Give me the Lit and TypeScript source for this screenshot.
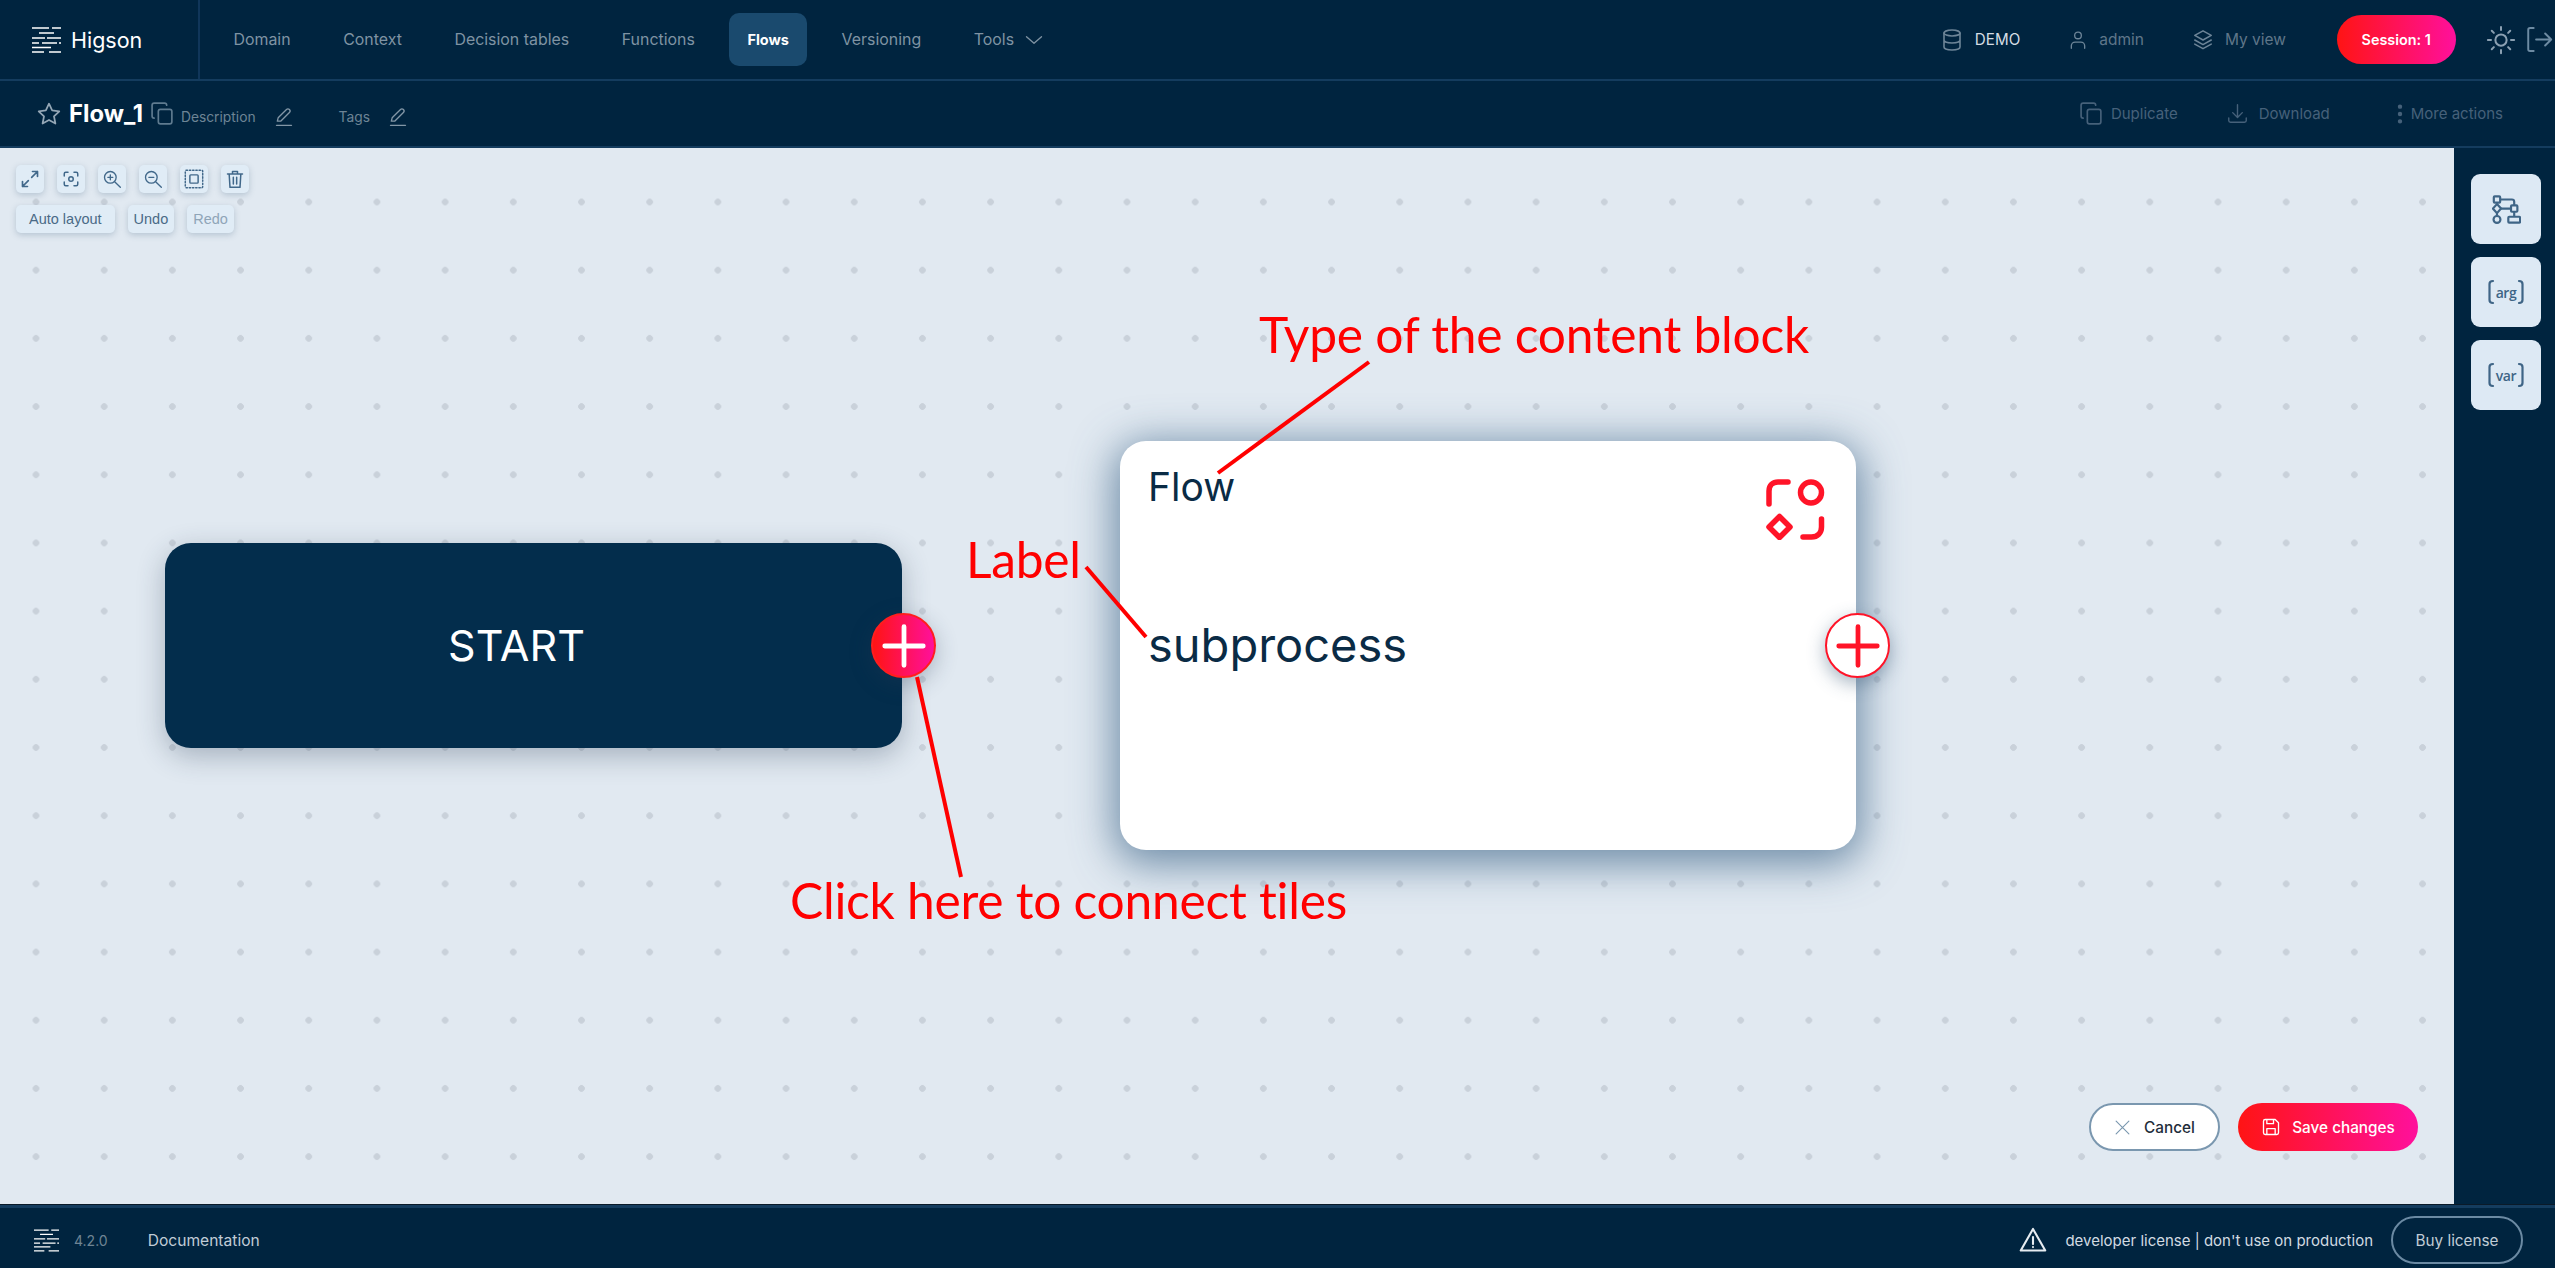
import { LitElement, html, css, svg } from 'lit';
import { customElement } from 'lit/decorators.js';

const logo = (w: number, h: number) => html`<svg width=${w} height=${h} viewBox="0 0 29 26" fill="none" stroke="#fff" stroke-width="1.5">
  <path d="M0 1h17M20 1h9M7 6h15M0 11h13M15 11h14M0 16h7M10 16h15M27 16h2M0 20.500h19M0 25h12M17 25h12"/>
</svg>`;

const ic = (size: number, body: unknown, stroke = 'currentColor', sw = 1.6) => html`<svg width=${size} height=${size} viewBox="0 0 24 24" fill="none" stroke=${stroke} stroke-width=${sw} stroke-linecap="round" stroke-linejoin="round">${body}</svg>`;

const copyPath = svg`<rect x="8" y="8" width="13" height="14" rx="2"/><path d="M4 16.500c-1 0-2-.8-2-2V4c0-1.200 1-2 2-2h10c1.200 0 2 .8 2 2"/>`;
const pencilPath = svg`<path d="M4 17l1-4L15 3c1-1 2.500-1 3.500 0s1 2.500 0 3.500L8 17zM3 22h18"/>`;
const bracket = (flip: boolean) => html`<svg width="7" height="26" viewBox="0 0 7 26" fill="none" stroke="currentColor" stroke-width="2.200" stroke-linecap="round">
  <path d=${flip ? 'M2 2c2.500 0 3.500 1 3.500 3v16c0 2-1 3-3.500 3' : 'M5 2C2.500 2 1.500 3 1.500 5v16c0 2 1 3 3.500 3'}/>
</svg>`;

@customElement('app-root')
export class AppRoot extends LitElement {
  static styles = css`
    :host {
      display: flex;
      flex-direction: column;
      width: 100%;
      height: 100vh;
      overflow: hidden;
      font-family: Inter, "Liberation Sans", sans-serif;
      background: #00243f;
      color: #fff;
    }
    .topbar {
      display: flex;
      align-items: center;
      height: 79px;
      border-bottom: 2px solid #143c5e;
      flex: none;
    }
    .brand {
      width: 166px;
      padding-left: 32px;
      height: 100%;
      display: flex;
      align-items: center;
      gap: 10px;
      border-right: 2px solid #10365a;
      font-size: 21.500px;
      font-weight: 400;
    }
    .nav {
      display: flex;
      align-items: center;
      gap: 16.600px;
      padding-left: 15.500px;
    }
    .nav a {
      display: flex;
      align-items: center;
      gap: 10px;
      height: 53px;
      padding: 0 18px;
      border-radius: 10px;
      font-size: 15.900px;
      color: #7f93a3;
    }
    .nav a.on {
      background: #1a4a6e;
      color: #fff;
      font-weight: 700;
      font-size: 14.500px;
    }
    .tr {
      margin-left: auto;
      display: flex;
      align-items: center;
      padding-right: 2px;
    }
    .ti {
      display: flex;
      align-items: center;
      gap: 11px;
      margin-right: 48px;
      font-size: 15.500px;
      color: #5f7689;
    }
    .ti.lit { color: #d5dde4; font-size: 15.200px; }
    .ti.view { margin-right: 51px; }
    .ti svg { color: #6d8598; }
    .session {
      width: 118.500px;
      height: 49px;
      border-radius: 25px;
      background: linear-gradient(90deg, #ff1414, #ff109c);
      display: flex;
      align-items: center;
      justify-content: center;
      font-size: 14.400px;
      font-weight: 600;
      margin-right: 30.500px;
    }
    .tr .sun { color: #8ba0b2; display: flex; margin-right: 8px; }
    .tr .out { color: #6d8ba3; display: flex; }

    .subbar {
      display: flex;
      align-items: center;
      height: 65px;
      border-bottom: 2px solid #143c5e;
      padding-left: 36px;
      flex: none;
    }
    .star { color: #94a7b6; display: flex; margin-right: 7px; }
    .title { font-size: 23.800px; font-weight: 700; margin-right: 7px; }
    .copy { color: #5f7b90; display: flex; margin-right: 6px; }
    .meta { font-size: 13.800px; color: #6d8495; margin-top: 7px; }
    .pen { color: #8296a6; display: flex; margin: 7px 0 0 18px; }
    .pen.a { margin-right: 45px; }
    .acts {
      margin-left: auto;
      display: flex;
      align-items: center;
      padding-right: 52px;
      font-size: 15px;
      color: #46617a;
    }
    .act { display: flex; align-items: center; gap: 11px; margin-left: 49px; }
    .act.dup { gap: 7px; margin-left: 0; }
    .act.more { gap: 0; margin-left: 59px; }

    .work { flex: 1; display: flex; min-height: 0; }
    .canvas {
      position: relative;
      flex: 1;
      background-color: #e1e9f1;
      background-image: radial-gradient(circle, #c9d1da 3px, transparent 3.600px);
      background-size: 68.200px 68.200px;
      background-position: 1.900px 19.900px;
      overflow: hidden;
    }
    .tools {
      display: flex;
      flex-direction: column;
      gap: 12px;
      padding: 17px 0 0 16px;
      position: relative;
      z-index: 1;
      width: max-content;
    }
    .row { display: flex; gap: 13px; }
    .tb {
      width: 28px;
      height: 28px;
      border-radius: 5px;
      background: #e0ecf6;
      box-shadow: 0 2px 6px rgba(70, 100, 130, .28);
      color: #41688a;
      display: flex;
      align-items: center;
      justify-content: center;
    }
    .tt {
      height: 28px;
      padding: 0 13px;
      border-radius: 5px;
      background: #e0ecf6;
      box-shadow: 0 2px 6px rgba(70, 100, 130, .28);
      color: #4a6a86;
      display: flex;
      align-items: center;
      font: 14.500px "Liberation Sans", Arial, sans-serif;
    }
    .tt.und { padding: 0 6px; }
    .tt.red { padding: 0 6px; color: #8fa5b8; }

    .node { position: absolute; border-radius: 26px; box-sizing: border-box; }
    .start {
      left: 165px;
      top: 395px;
      width: 737px;
      height: 205px;
      background: #032d4c;
      box-shadow: 0 8px 28px rgba(40, 60, 85, .32);
      display: flex;
      align-items: center;
      justify-content: center;
      padding: 0 34px 2px 0;
      font-size: 43px;
      font-weight: 400;
    }
    .flow {
      left: 1120px;
      top: 293px;
      width: 736px;
      height: 409px;
      background: #fff;
      box-shadow: 0 8px 42px 6px rgba(60, 100, 135, .7);
      color: #0a2b45;
      padding: 22px 28px;
    }
    .flow .type { font-size: 39px; line-height: 48px; }
    .flow .label { font-size: 47px; line-height: 60px; margin-top: 104px; }
    .flow .badge { position: absolute; right: 30px; top: 38px; display: flex; }
    .plus {
      position: absolute;
      width: 65px;
      height: 65px;
      border-radius: 50%;
      box-sizing: border-box;
      display: flex;
      align-items: center;
      justify-content: center;
    }
    .plus.hot {
      left: 871px;
      top: 465px;
      background: linear-gradient(90deg, #ff1414, #ff109c);
      border: 2px solid #ff1e1e;
      box-shadow: 0 6px 22px rgba(40, 60, 85, .3);
    }
    .plus.cold {
      left: 1825px;
      top: 465px;
      background: #fff;
      border: 2px solid #ff1428;
      box-shadow: 0 6px 18px rgba(60, 90, 120, .45);
    }
    .notes { position: absolute; inset: 0; pointer-events: none; }
    .note {
      position: absolute;
      color: #f00;
      font-family: Lato, "Open Sans", sans-serif;
      font-size: 49.700px;
      letter-spacing: -.25px;
      line-height: 60px;
      white-space: nowrap;
    }
    .n1 { left: 1259px; top: 156px; }
    .n2 { left: 966px; top: 381px; }
    .n3 { left: 790px; top: 722px; }
    .save {
      position: absolute;
      left: 2238px;
      top: 955px;
      width: 180px;
      height: 48px;
      border-radius: 24px;
      background: linear-gradient(90deg, #ff1414, #ff109c);
      display: flex;
      align-items: center;
      justify-content: center;
      gap: 11px;
      font-size: 15.300px;
      font-weight: 500;
    }
    .cancel {
      position: absolute;
      left: 2089px;
      top: 955px;
      width: 131px;
      height: 48px;
      border-radius: 24px;
      box-sizing: border-box;
      background: #fff;
      border: 2px solid #7a97af;
      color: #1f2d3a;
      display: flex;
      align-items: center;
      justify-content: center;
      gap: 13px;
      font-size: 15.300px;
      font-weight: 500;
    }
    .cancel svg { color: #7a97af; }

    .side {
      width: 101px;
      flex: none;
      display: flex;
      flex-direction: column;
      align-items: flex-start;
      gap: 13px;
      padding: 26px 0 0 17px;
      box-sizing: border-box;
    }
    .card {
      width: 70px;
      height: 70px;
      border-radius: 9px;
      background: #dde9f4;
      display: flex;
      align-items: center;
      justify-content: center;
      color: #3f6586;
    }
    .brk {
      display: flex;
      align-items: center;
      gap: 1px;
      font: 600 14px "Open Sans", sans-serif;
      letter-spacing: -.4px;
    }

    .footer {
      flex: none;
      height: 64px;
      box-sizing: border-box;
      border-top: 1px solid #0a1a28;
      display: flex;
      align-items: center;
      padding: 7px 32px 0 34px;
      box-shadow: inset 0 3px 0 #143c5e;
    }
    .ver { font-size: 14px; color: #6f8494; margin: 0 40px 0 15px; }
    .doc { font-size: 15.600px; color: #c0ccd6; }
    .lic { margin-left: auto; display: flex; align-items: center; }
    .lic span { font-size: 15px; color: #d2dbe2; margin: 0 18px; }
    .buy {
      width: 132px;
      height: 48px;
      box-sizing: border-box;
      border: 2px solid #6b8aa3;
      border-radius: 24px;
      display: flex;
      align-items: center;
      justify-content: center;
      font-size: 15.300px;
      color: #c0ccd6;
    }
  `;

  render() {
    const white = '#fff';
    const red = '#ff1428';
    return html`
      <div class="topbar">
        <div class="brand">${logo(29, 26)}<span>Higson</span></div>
        <div class="nav">
          <a>Domain</a>
          <a>Context</a>
          <a>Decision tables</a>
          <a>Functions</a>
          <a class="on">Flows</a>
          <a>Versioning</a>
          <a>Tools ${ic(20, svg`<path d="M3 8l9 8 9-8"/>`)}</a>
        </div>
        <div class="tr">
          <div class="ti lit">
            ${ic(24, svg`<ellipse cx="12" cy="5" rx="8" ry="3"/><path d="M4 5v14c0 1.700 3.600 3 8 3s8-1.300 8-3V5M4 12c0 1.700 3.600 3 8 3s8-1.300 8-3"/>`)}
            DEMO
          </div>
          <div class="ti">
            ${ic(20, svg`<circle cx="12" cy="6.500" r="4"/><path d="M4 22v-3c0-2.500 2-4.500 4.500-4.500h7c2.500 0 4.500 2 4.500 4.500v3"/>`)}
            admin
          </div>
          <div class="ti view">
            ${ic(22, svg`<path d="M12 2l9 5-9 5-9-5zM3 12l9 5 9-5M3 16.500l9 5 9-5"/>`)}
            My view
          </div>
          <div class="session">Session: 1</div>
          <span class="sun">${ic(30, svg`<circle cx="12" cy="12" r="4.500"/><path d="M12 1.500v2.500M12 20v2.500M1.500 12H4M20 12h2.500M4.600 4.600l1.700 1.700M17.700 17.700l1.700 1.700M4.600 19.400l1.700-1.700M17.700 6.300l1.700-1.700"/>`)}</span>
          <span class="out">${ic(29, svg`<path d="M8 2.500H5c-1 0-1.500.6-1.500 1.500v16c0 .9.5 1.500 1.500 1.500h3M10 12h12M17.500 7l5 5-5 5"/>`)}</span>
        </div>
      </div>

      <div class="subbar">
        <span class="star">${ic(26, svg`<path d="M12 2.500l2.900 6.200 6.600.8-4.900 4.600 1.300 6.700L12 17.500l-5.900 3.300 1.300-6.700L2.500 9.500l6.600-.8z"/>`)}</span>
        <span class="title">Flow_1</span>
        <span class="copy">${ic(25, copyPath)}</span>
        <span class="meta">Description</span>
        <span class="pen a">${ic(20, pencilPath)}</span>
        <span class="meta">Tags</span>
        <span class="pen">${ic(20, pencilPath)}</span>
        <div class="acts">
          <div class="act dup">${ic(25, copyPath)} Duplicate</div>
          <div class="act">${ic(21, svg`<path d="M12 2v14M6.500 11l5.500 5.500 5.500-5.500M2 17v3c0 1.200.8 2 2 2h16c1.200 0 2-.8 2-2v-3"/>`)} Download</div>
          <div class="act more">${ic(22, svg`<circle cx="12" cy="4" r="1.600" fill="currentColor"/><circle cx="12" cy="12" r="1.600" fill="currentColor"/><circle cx="12" cy="20" r="1.600" fill="currentColor"/>`)} More actions</div>
        </div>
      </div>

      <div class="work">
        <div class="canvas">
          <div class="tools">
            <div class="row">
              <div class="tb">${ic(20, svg`<path d="M14 10l7-7M15 3h6v6M10 14l-7 7M3 15v6h6"/>`, 'currentColor', 2)}</div>
              <div class="tb">${ic(18, svg`<circle cx="12" cy="12" r="3"/><path d="M3 8V5c0-1 1-2 2-2h3M16 3h3c1 0 2 1 2 2v3M21 16v3c0 1-1 2-2 2h-3M8 21H5c-1 0-2-1-2-2v-3"/>`, 'currentColor', 2)}</div>
              <div class="tb">${ic(20, svg`<circle cx="10" cy="10" r="7"/><path d="M15.500 15.500L22 22M10 7v6M7 10h6"/>`)}</div>
              <div class="tb">${ic(20, svg`<circle cx="10" cy="10" r="7"/><path d="M15.500 15.500L22 22M7 10h6"/>`)}</div>
              <div class="tb">${ic(22, svg`<rect x="2.500" y="2.500" width="19" height="19" rx="1" stroke-dasharray="1.500 2"/><rect x="7.500" y="7.500" width="9" height="9" rx="1"/>`, 'currentColor', 1.6)}</div>
              <div class="tb">${ic(20, svg`<path d="M3 6h18M9 6V3h6v3M5 6l1 16h12l1-16M10 10v8M14 10v8"/>`, 'currentColor', 1.8)}</div>
            </div>
            <div class="row">
              <div class="tt">Auto layout</div>
              <div class="tt und">Undo</div>
              <div class="tt red">Redo</div>
            </div>
          </div>

          <div class="node start">START</div>
          <div class="node flow">
            <div class="type">Flow</div>
            <div class="label">subprocess</div>
            <span class="badge">
              <svg width="60" height="61" viewBox="0 0 60 61" fill="none" stroke="#ff1428" stroke-width="5.500" stroke-linecap="round" stroke-linejoin="round">
                <path d="M3 25V12C3 6 7 3 12 3h10"/>
                <circle cx="45" cy="13.500" r="10.500"/>
                <path d="M13.500 37.500L24 48 13.500 58.500 3 48z"/>
                <path d="M55.500 40v8c0 6-4 10-10 10H37"/>
              </svg>
            </span>
          </div>
          <div class="plus hot">${ic(44, svg`<path d="M12 1.500v21M1.500 12h21"/>`, white, 2.600)}</div>
          <div class="plus cold">${ic(44, svg`<path d="M12 1.500v21M1.500 12h21"/>`, red, 2.600)}</div>

          <div class="notes">
            <svg width="2454" height="1056" fill="none" stroke="#f00" stroke-width="4">
              <path d="M1218 325L1369 214"/>
              <path d="M1086 419L1146 489"/>
              <path d="M917 529L961 729"/>
            </svg>
            <div class="note n1">Type of the content block</div>
            <div class="note n2">Label</div>
            <div class="note n3">Click here to connect tiles</div>
          </div>

          <div class="cancel">${ic(17, svg`<path d="M3 3l18 18M21 3L3 21"/>`)} Cancel</div>
          <div class="save">${ic(20, svg`<path d="M3 5c0-1.200.8-2 2-2h12l4 4v12c0 1.200-.8 2-2 2H5c-1.200 0-2-.8-2-2zM7 3v5h8V3M7 21v-7h10v7"/>`, white)} Save changes</div>
        </div>

        <div class="side">
          <div class="card">
            <svg width="29" height="29" viewBox="0 0 32 32" fill="none" stroke="currentColor" stroke-width="2.400">
              <rect x="2" y="1.500" width="7" height="7" rx="1"/>
              <path d="M5.500 10L10 15l-4.500 5L1 15z"/>
              <circle cx="5.500" cy="27" r="3.800"/>
              <rect x="21" y="11.500" width="7" height="7" rx="1"/>
              <rect x="18" y="24" width="13" height="6.500" rx="1"/>
              <path d="M9 5h13c1.500 0 2.500 1 2.500 2.500v4M10 15h11M5.500 20v3M24.500 18.500V24"/>
            </svg>
          </div>
          <div class="card"><div class="brk">${bracket(false)}arg${bracket(true)}</div></div>
          <div class="card"><div class="brk">${bracket(false)}var${bracket(true)}</div></div>
        </div>
      </div>

      <div class="footer">
        ${logo(25, 23)}
        <span class="ver">4.2.0</span>
        <span class="doc">Documentation</span>
        <div class="lic">
          ${ic(28, svg`<path d="M12 2.500L1.500 21h21zM12 9.500v6M12 18v.1"/>`, '#e6ecf1', 1.800)}
          <span>developer license | don't use on production</span>
          <div class="buy">Buy license</div>
        </div>
      </div>
    `;
  }
}
